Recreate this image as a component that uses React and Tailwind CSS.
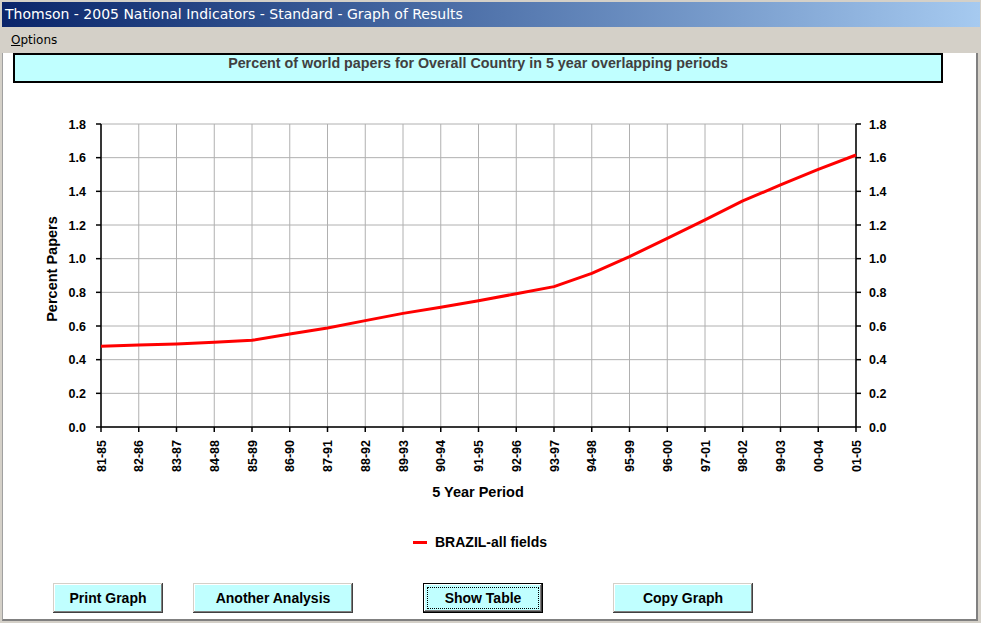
import React from "react";

const periods = [
    "81-85", "82-86", "83-87", "84-88", "85-89", "86-90", "87-91",
    "88-92", "89-93", "90-94", "91-95", "92-96", "93-97", "94-98",
    "95-99", "96-00", "97-01", "98-02", "99-03", "00-04", "01-05",
];

const values = [
    0.479, 0.487, 0.493, 0.503, 0.515, 0.552, 0.588, 0.632, 0.675, 0.711,
    0.75, 0.792, 0.834, 0.913, 1.012, 1.121, 1.23, 1.343, 1.438, 1.531, 1.616,
];

// plot box in page coordinates
const LEFT = 101;
const RIGHT = 856;
const TOP = 124;
const BOTTOM = 427;
const STEP_X = (RIGHT - LEFT) / (periods.length - 1);
const yFor = (v) => BOTTOM - ((BOTTOM - TOP) / 1.8) * v;
const yTicks = [0, 0.2, 0.4, 0.6, 0.8, 1.0, 1.2, 1.4, 1.6, 1.8];

const chartFont = { fontFamily: '"Liberation Sans", Arial, sans-serif', fontWeight: 700 };

function Chart() {
    const points = values.map((v, i) => `${LEFT + i * STEP_X},${yFor(v)}`).join(" ");

    return (
        <svg width="973" height="450" viewBox="3 83 973 450" className="block" style={chartFont}>
            {/* grid */}
            {periods.map((p, i) => (
                <line key={p} x1={LEFT + i * STEP_X} y1={TOP} x2={LEFT + i * STEP_X} y2={BOTTOM} stroke="#b0b0b0" strokeWidth="1" />
            ))}
            {yTicks.map((t) => (
                <line key={t} x1={LEFT} y1={yFor(t)} x2={RIGHT} y2={yFor(t)} stroke="#b0b0b0" strokeWidth="1" />
            ))}

            {/* axes */}
            <line x1={LEFT} y1={TOP} x2={LEFT} y2={BOTTOM} stroke="#000" strokeWidth="1.5" />
            <line x1={RIGHT} y1={TOP} x2={RIGHT} y2={BOTTOM} stroke="#000" strokeWidth="1.5" />
            <line x1={LEFT} y1={BOTTOM} x2={RIGHT} y2={BOTTOM} stroke="#000" strokeWidth="1.5" />

            {yTicks.map((t) => (
                <g key={`t${t}`}>
                    <line x1={LEFT - 5} y1={yFor(t)} x2={LEFT} y2={yFor(t)} stroke="#000" strokeWidth="1.5" />
                    <line x1={RIGHT} y1={yFor(t)} x2={RIGHT + 5} y2={yFor(t)} stroke="#000" strokeWidth="1.5" />
                    <text x="86" y={yFor(t) + 4.5} textAnchor="end" fontSize="12.5">{t.toFixed(1)}</text>
                    <text x="869" y={yFor(t) + 4.5} fontSize="12.5">{t.toFixed(1)}</text>
                </g>
            ))}

            {periods.map((p, i) => {
                const x = LEFT + i * STEP_X;
                return (
                    <g key={`x${p}`}>
                        <line x1={x} y1={BOTTOM} x2={x} y2={BOTTOM + 5} stroke="#000" strokeWidth="1.5" />
                        <text
                            x={x + 4.5}
                            y="440"
                            textAnchor="end"
                            fontSize="12.5"
                            transform={`rotate(-90 ${x + 4.5} 440)`}
                        >
                            {p}
                        </text>
                    </g>
                );
            })}

            <text x="57" y="269" textAnchor="middle" fontSize="14.5" transform="rotate(-90 57 269)">
                Percent Papers
            </text>
            <text x="478" y="497" textAnchor="middle" fontSize="14.5">5 Year Period</text>

            <polyline points={points} fill="none" stroke="#ff0000" strokeWidth="3" strokeLinejoin="round" />
        </svg>
    );
}

function WinButton({ label, width, focused }) {
    return (
        <button
            className={`h-[30px] ${width} bg-[#c0ffff] text-[14px] font-bold text-black ${
                focused
                    ? "border border-black shadow-[inset_-1px_-1px_#404040,inset_1px_1px_#ffffff,inset_-2px_-2px_#808080] outline-1 outline-dotted outline-black outline-offset-[-5px]"
                    : "shadow-[inset_-1px_-1px_#404040,inset_1px_1px_#d4d0c8,inset_-2px_-2px_#808080,inset_2px_2px_#ffffff]"
            }`}
            style={chartFont}
        >
            {label}
        </button>
    );
}

export default function App() {
    return (
        <div
            className="w-[981px] h-[623px] bg-[#d4d0c8] pt-[2px] pl-[2px] pr-[3px] pb-[2px] flex flex-col overflow-hidden"
            style={{ fontFamily: '"DejaVu Sans", Tahoma, sans-serif' }}
        >
            {/* title bar */}
            <div className="h-[25px] -mr-[2px] flex items-center pl-[3px] bg-gradient-to-r from-[#0a246a] to-[#a6caf0] text-white text-[14px]">
                Thomson - 2005 National Indicators - Standard - Graph of Results
            </div>

            {/* menu bar */}
            <div className="h-[26px] flex items-center pl-[9px] text-[12px] text-black">
                <span>
                    <span className="underline">O</span>ptions
                </span>
            </div>

            {/* client area */}
            <div className="h-[568px] bg-white border-l border-l-[#a0a0a0] border-r-2 border-r-[#808080] border-b-2 border-b-[#808080] flex flex-col">
                <div
                    className="ml-[10px] w-[930px] h-[30px] shrink-0 bg-[#c0ffff] border-2 border-black flex justify-center text-[14.3px] leading-[16px] font-bold text-[#404040]"
                    style={chartFont}
                >
                    Percent of world papers for Overall Country in 5 year overlapping periods
                </div>

                <Chart />

                <div className="h-[18px] flex items-center pl-[410px] gap-[8px]" style={chartFont}>
                    <span className="block w-[14px] h-[3px] bg-[#ff0000]" />
                    <span className="text-[14px] text-black">BRAZIL-all fields</span>
                </div>

                <div className="mt-[32px] flex pl-[50px]">
                    <WinButton label="Print Graph" width="w-[110px]" />
                    <div className="ml-[30px]">
                        <WinButton label="Another Analysis" width="w-[160px]" />
                    </div>
                    <div className="ml-[70px]">
                        <WinButton label="Show Table" width="w-[120px]" focused />
                    </div>
                    <div className="ml-[70px]">
                        <WinButton label="Copy Graph" width="w-[140px]" />
                    </div>
                </div>
            </div>
        </div>
    );
}
